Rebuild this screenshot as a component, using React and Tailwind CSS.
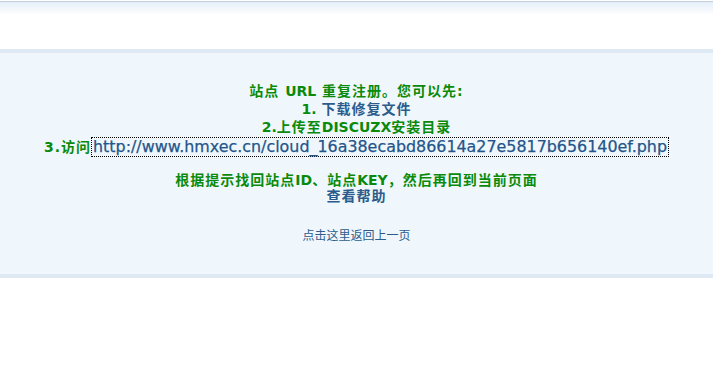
import React from 'react'

const green = 'text-[#0a8a0a]'
const blue = 'text-[#2b5c8c]'

const Cjk = ({ children, className = '' }) => (
  <span className={`tracking-[1px] ${className}`}>{children}</span>
)

export default function App() {
  return (
    <div
      className="min-h-[375px] bg-white"
      style={{ fontFamily: '"DejaVu Sans", "Noto Sans CJK SC", sans-serif' }}
    >
      {/* top bar */}
      <div className="h-[48px] border-t-[1px] border-[#c3cfdb] mt-[1px] bg-gradient-to-b from-[#e4eef8] to-white to-[28%]" />

      {/* message box */}
      <div className="border-y-4 border-[#dfe9f4] bg-[#f0f7fc] h-[229px]">
        <div className="pt-[29px] text-center text-[14px] font-bold">
          <div className={`h-[18px] leading-[18px] ${green}`}>
            <Cjk>站点 </Cjk>URL<Cjk> 重复注册。您可以先:</Cjk>
          </div>
          <div className="h-[18px] leading-[18px]">
            <span className={green}>1. </span>
            <Cjk className={blue}>下载修复文件</Cjk>
          </div>
          <div className={`h-[18px] leading-[18px] ${green}`}>
            2.<Cjk>上传至</Cjk>DISCUZX<Cjk>安装目录</Cjk>
          </div>
          <div className="h-[22px] flex items-center justify-center">
            <Cjk className={green}>3.访问</Cjk>
            <a
              href="#"
              className="text-[#24558a] font-normal text-[15.9px] leading-[18px] px-[1px] border border-dotted border-black"
              style={{ WebkitTextStroke: '0.25px #24558a' }}
            >
              http://www.hmxec.cn/cloud_16a38ecabd86614a27e5817b656140ef.php
            </a>
          </div>
          <div className="h-[14px]" />
          <div className={`h-[16px] leading-[16px] ${green}`}>
            <Cjk>根据提示找回站点</Cjk>ID<Cjk>、站点</Cjk>KEY<Cjk>，然后再回到当前页面</Cjk>
          </div>
          <div className={`h-[16px] leading-[16px] ${blue}`}>
            <Cjk>查看帮助</Cjk>
          </div>
          <div className={`mt-[23px] text-[12px] font-normal leading-[18px] ${blue}`}>
            点击这里返回上一页
          </div>
        </div>
      </div>
    </div>
  )
}
